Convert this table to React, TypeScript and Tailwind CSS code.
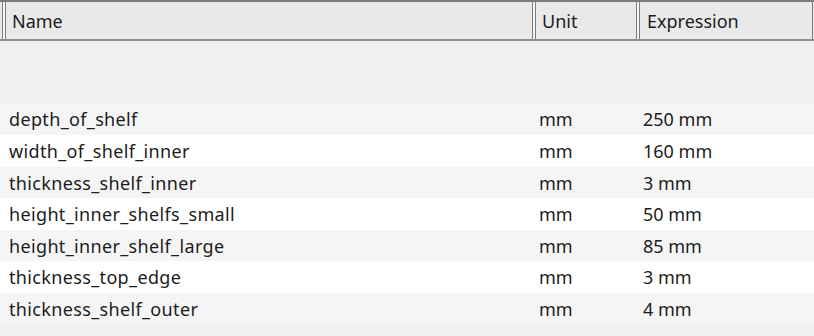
import React from "react";

const rows: [string, string, string, number][] = [
  ["depth_of_shelf", "mm", "250 mm", 32],
  ["width_of_shelf_inner", "mm", "160 mm", 32],
  ["thickness_shelf_inner", "mm", "3 mm", 31],
  ["height_inner_shelfs_small", "mm", "50 mm", 32],
  ["height_inner_shelf_large", "mm", "85 mm", 31],
  ["thickness_top_edge", "mm", "3 mm", 32],
  ["thickness_shelf_outer", "mm", "4 mm", 31],
];

function Sep() {
  return <div className="w-[4px] h-full shrink-0 border-x border-[#7c7c7c] bg-[#f6f6f6]" />;
}

export default function App() {
  return (
    <div
      className="w-[814px] h-[336px] bg-[#f0f0f0] overflow-hidden text-[18px] leading-none text-[#1c1c1c]"
      style={{ fontFamily: '"Noto Sans", "Open Sans", sans-serif' }}
    >
      <div className="h-[41px] flex items-stretch bg-[#e9e9e9] border-t-2 border-b-2 border-t-[#7c7c7c] border-b-[#8f8f8f]">
        <div className="w-[2px] shrink-0" />
        <Sep />
        <div className="w-[526px] shrink-0 flex items-center pl-[6px]">Name</div>
        <Sep />
        <div className="w-[100px] shrink-0 flex items-center pl-[6px]">Unit</div>
        <Sep />
        <div className="flex-1 flex items-center pl-[7px]">Expression</div>
        <div className="w-[1px] shrink-0 bg-[#7c7c7c]" />
        <div className="w-[1px] shrink-0" />
      </div>
      <div className="h-[62px]" />
      {rows.map(([n, u, e, h], i) => (
        <div
          key={n}
          className={`flex items-center ${i % 2 === 0 ? "bg-[#f5f5f5]" : "bg-white"}`}
          style={{ height: h }}
        >
          <div className="w-[530px] shrink-0 pl-[9px] tracking-[0.35px]">{n}</div>
          <div className="w-[104px] shrink-0 ml-[9px]">{u}</div>
          <div className="flex-1">{e}</div>
        </div>
      ))}
    </div>
  );
}
